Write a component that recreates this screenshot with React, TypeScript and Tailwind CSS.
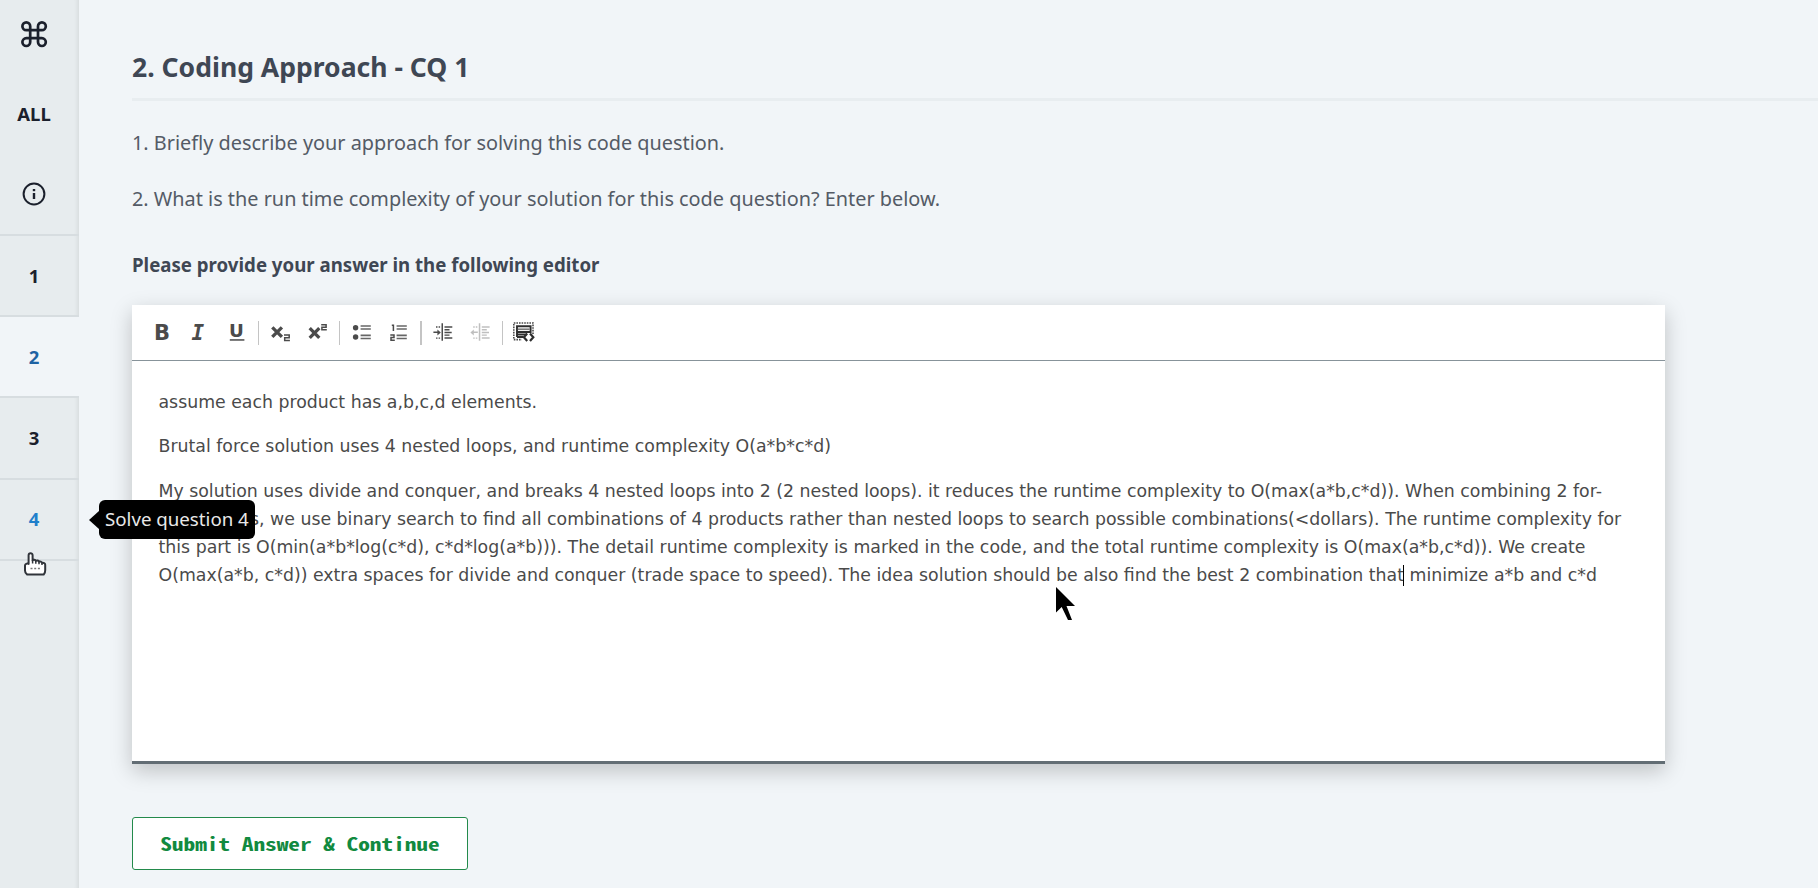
import type { ReactNode } from 'react';

const INK = '#4b4b4b';

function NavItem({ children, active = false, className = '' }: { children: ReactNode; active?: boolean; className?: string }) {
  return (
    <div
      className={`flex h-[81.3px] w-full shrink-0 items-center justify-center border-b-2 pr-[11px] text-[18.5px] font-bold ${
        active ? 'bg-[#f1f5f8]' : 'shadow-[inset_-6px_0_5px_-5px_rgba(0,0,0,0.09)]'
      } ${className}`}
    >
      {children}
    </div>
  );
}

function Sidebar() {
  return (
    <nav className="flex w-[79px] shrink-0 flex-col bg-[#e7ecee] text-[#1b202c]">
      <div className="flex h-[235.8px] shrink-0 flex-col items-center border-b-2 border-[#d7dde0] pr-[11px] shadow-[inset_-6px_0_5px_-5px_rgba(0,0,0,0.09)]">
        <svg className="mt-[20px] h-[28px] w-[28px]" viewBox="0 0 28 28" fill="none" stroke="currentColor" strokeWidth="2.7">
          <path d="M10.2 6.3v15.8a3.9 3.9 0 1 1-3.9-3.9h15.6a3.9 3.9 0 1 1-3.9 3.9V6.3a3.9 3.9 0 1 1 3.9 3.9H6.3a3.9 3.9 0 1 1 3.9-3.9z" />
        </svg>
        <div className="mt-[53px] h-[26px] text-[18.5px] leading-[26px] font-bold">ALL</div>
        <svg className="mt-[55px] h-[24px] w-[24px]" viewBox="0 0 24 24" fill="none" stroke="currentColor" strokeWidth="2">
          <circle cx="12" cy="12" r="10.4" />
          <path d="M12 11v6" strokeWidth="2.4" />
          <path d="M12 7v2.2" strokeWidth="2.4" />
        </svg>
      </div>
      <NavItem className="border-[#d7dde0]">1</NavItem>
      <NavItem active className="border-[#d7dde0] text-[#1e63a3]">2</NavItem>
      <NavItem className="border-[#d7dde0]">3</NavItem>
      <NavItem className="border-[#d7dde0] text-[#1f7fcb]">4</NavItem>
      <div className="w-full flex-1 shadow-[inset_-6px_0_5px_-5px_rgba(0,0,0,0.09)]" />
    </nav>
  );
}

function Tool({ x, children, faded = false }: { x: number; children: ReactNode; faded?: boolean }) {
  return (
    <svg className={`h-[37px] w-[37px] shrink-0 ${faded ? 'opacity-35' : ''}`} viewBox={`${x} 314 37 37`} fill={INK} stroke="none">
      {children}
    </svg>
  );
}

function Sep() {
  return <div className="mx-[3.1px] h-[24px] w-[1.2px] shrink-0 bg-[#c4c4c4]" />;
}

function Toolbar() {
  return (
    <div className="flex h-[56px] items-center border-b-[1.5px] border-[#87939a] pl-[11.5px]">
      <Tool x={143.5}>
        <text x="153.6" y="339.5" fontSize="21" fontWeight="700" fontFamily="DejaVu Sans, sans-serif">B</text>
      </Tool>
      <Tool x={180.5}>
        <text x="191" y="339.5" fontSize="21" fontWeight="700" fontStyle="italic" fontFamily="DejaVu Sans Mono, monospace">I</text>
      </Tool>
      <Tool x={217.5}>
        <text x="228.6" y="337.3" fontSize="18.3" fontWeight="700" fontFamily="DejaVu Sans, sans-serif">U</text>
        <rect x="229.3" y="339.2" width="14.6" height="1.5" />
      </Tool>
      <Sep />
      <Tool x={262}>
        <path d="M272.3 327.3l9.6 9.6M281.9 327.3l-9.6 9.6" fill="none" stroke={INK} strokeWidth="3.3" />
        <path d="M284 335.1h5.2v2.6h-4.5v2.7h5.2" fill="none" stroke={INK} strokeWidth="1.5" />
      </Tool>
      <Tool x={299}>
        <path d="M309.7 328.2l9.6 9.6M319.3 328.2l-9.6 9.6" fill="none" stroke={INK} strokeWidth="3.3" />
        <path d="M321.2 324.7h4.9v2.5h-4.2v2.6h4.9" fill="none" stroke={INK} strokeWidth="1.5" />
      </Tool>
      <Sep />
      <Tool x={343.4}>
        <circle cx="356" cy="327.7" r="2.7" />
        <circle cx="356" cy="337" r="2.7" />
        <path d="M361 325.2h10.2v1.6H361zM361 328.2h10.2v1.6H361zM361 334.6h10.2v1.6H361zM361 337.7h10.2v1.6H361z" opacity=".85" />
      </Tool>
      <Tool x={380.4}>
        <path d="M392.2 325.2h1.6v5.8M390.7 334.9h3.7v2.5h-3v2.9h3.8" fill="none" stroke={INK} strokeWidth="1.5" />
        <path d="M397 325.2h10.2v1.6H397zM397 328.2h10.2v1.6H397zM397 334.6h10.2v1.6H397zM397 337.7h10.2v1.6H397z" opacity=".85" />
      </Tool>
      <Sep />
      <Tool x={424.8}>
        <path d="M441.3 323.3h1.5v17.4h-1.5zM433.2 331.6h4v-2.2l3.4 3-3.4 3v-2.3h-4zM435.8 326.3h1.5v1.4h-1.5zM438.4 326.3h1.5v1.4h-1.5zM435.8 337.4h1.5v1.4h-1.5zM438.4 337.4h1.5v1.4h-1.5z" />
        <path d="M444.3 326.2h7.8v1.5h-7.8zM444.3 329h5v1.4h-5zM444.3 331.7h7.2v1.5h-7.2zM444.3 334.4h5v1.4h-5zM444.3 337.2h7.8v1.5h-7.8z" />
      </Tool>
      <Tool x={461.8} faded>
        <path d="M478.6 323.3h1.5v17.4h-1.5zM477.6 331.6h-4v-2.2l-3.4 3 3.4 3v-2.3h4zM473 326.3h1.5v1.4H473zM475.6 326.3h1.5v1.4h-1.5zM473 337.4h1.5v1.4H473zM475.6 337.4h1.5v1.4h-1.5z" />
        <path d="M481.6 326.2h7.8v1.5h-7.8zM481.6 329h5v1.4h-5zM481.6 331.7h7.2v1.5h-7.2zM481.6 334.4h5v1.4h-5zM481.6 337.2h7.8v1.5h-7.8z" />
      </Tool>
      <Sep />
      <Tool x={506.2}>
        <path d="M533.2 334v-11H514v16.6h8" fill="none" stroke={INK} strokeWidth="1.6" strokeDasharray="1.6 1" />
        <path d="M517.2 326.2h13.6v5.8h-13.6zM517.2 325.5v11.5M517.2 334.5h9.5M517.2 337h6.5" fill="none" stroke="#2e2e2e" strokeWidth="1.9" />
        <path d="M518 328.4h12v1.7H518z" fill="#7c7c7c" />
        <path d="M527.4 333.6l-3.3 3.7 3.3 3.7M530.2 333.6l3.3 3.7-3.3 3.7" fill="none" stroke="#2e2e2e" strokeWidth="2.2" />
      </Tool>
    </div>
  );
}

function Editor() {
  return (
    <section className="mt-[26px] flex h-[459px] w-[1533px] flex-col border-b-[3px] border-[#626d74] bg-white shadow-[0_7px_20px_rgba(0,0,0,0.21)]">
      <Toolbar />
      <div className="pt-[26.5px] pl-[26.5px] font-['DejaVu_Sans',sans-serif] text-[17.345px] leading-[28px] whitespace-nowrap text-[#4a4a4a]">
        <p>assume each product has a,b,c,d elements.</p>
        <p className="mt-[16.5px]">Brutal force solution uses 4 nested loops, and runtime complexity O(a*b*c*d)</p>
        <p className="mt-[16.5px]">
          My solution uses divide and conquer, and breaks 4 nested loops into 2 (2 nested loops). it reduces the runtime complexity to O(max(a*b,c*d)). When combining 2 for-
          <br />
          loop results, we use binary search to find all combinations of 4 products rather than nested loops to search possible combinations(&lt;dollars). The runtime complexity for
          <br />
          this part is O(min(a*b*log(c*d), c*d*log(a*b))). The detail runtime complexity is marked in the code, and the total runtime complexity is O(max(a*b,c*d)). We create
          <br />
          O(max(a*b, c*d)) extra spaces for divide and conquer (trade space to speed). The idea solution should be also find the best 2 combination that
          <span className="relative">
            <span className="absolute top-0 left-[-1px] h-[21px] w-[1.3px] bg-black" />
          </span>{' '}
          minimize a*b and c*d
        </p>
      </div>
    </section>
  );
}

export default function App() {
  return (
    <div className="relative flex h-[888px] w-[1818px] overflow-hidden bg-[#f1f5f8] font-['Noto_Sans','Open_Sans',sans-serif]">
      <Sidebar />
      <main className="flex flex-1 flex-col pl-[53px] text-[#545b66]">
        <h1 className="mt-[47px] h-[54px] border-b-[3px] border-[#e8edf0] text-[26.55px] leading-[40px] font-bold text-[#3f4754]">2. Coding Approach - CQ 1</h1>
        <p className="mt-[28px] h-[28px] text-[19.86px] leading-[28px]">1. Briefly describe your approach for solving this code question.</p>
        <p className="mt-[28px] h-[28px] text-[19.86px] leading-[28px]">2. What is the run time complexity of your solution for this code question? Enter below.</p>
        <p className="mt-[38px] h-[28px] text-[18.66px] leading-[28px] font-bold text-[#3f4754]">Please provide your answer in the following editor</p>
        <Editor />
        <button className="mt-[53px] h-[53px] w-[336px] rounded-[3px] border-[1.5px] border-[#238a4b] bg-white font-['Noto_Sans_Mono_CJK_SC','DejaVu_Sans_Mono',monospace] text-[18px] font-bold whitespace-nowrap text-[#118a3f]">
          <span className="inline-block scale-x-[1.294]">Submit Answer &amp; Continue</span>
        </button>
      </main>

      <div className="absolute top-[500px] left-[99px] flex h-[39px] w-[156px] items-center rounded-[6px] bg-black pl-[6px] text-[18.7px] whitespace-nowrap text-[#e9e9e9]">
        <span className="absolute top-[11px] left-[-10px] h-0 w-0 border-y-[9px] border-r-[10px] border-y-transparent border-r-black" />
        Solve question 4
      </div>

      <svg className="absolute top-[551px] left-[22px] h-[26px] w-[26px]" viewBox="0 0 26 26">
        <path
          d="M6.6 4.2c0-2.6 4-2.6 4 0v5.2c.9-.9 2.7-.7 3.2.5 1-.7 2.7-.4 3.2.8 1.1-.5 2.6 0 3 1.1 1.5-.4 3.2.3 3.2 2v5.4c0 1.7-.4 3.4-1.4 4.2H5c-1.2-.8-2-2.2-2-4v-4.8c0-1.7 2-2.4 3.6-1.7z"
          fill="#fff"
          stroke="#30343a"
          strokeWidth="2"
          strokeLinejoin="round"
        />
        <path d="M10.6 9v3.6M13.8 10v2.8M17 10.8v2.4M20 12v2" stroke="#30343a" strokeWidth="1.5" />
        <path d="M8.5 17.5h11" stroke="#777" strokeWidth="1.4" strokeDasharray="2 1.7" />
      </svg>

      <svg className="absolute top-[587px] left-[1056px] h-[33px] w-[19px]" viewBox="0 0 19 33">
        <path d="M0 0v25.5l5.7-5.5L12 33h4L10.5 19H19z" fill="#000" />
      </svg>
    </div>
  );
}
